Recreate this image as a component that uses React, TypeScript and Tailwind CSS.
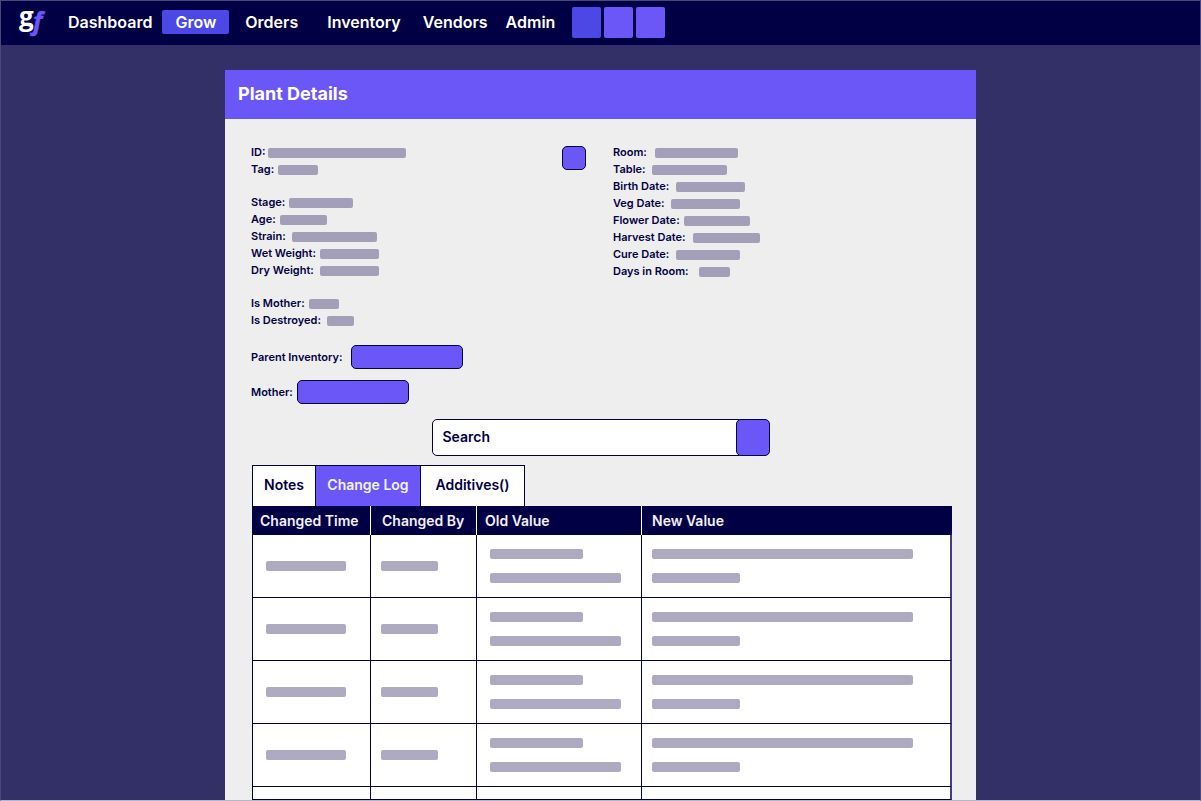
import React from 'react';

const navItems = [
  { label: 'Dashboard', className: 'ml-[18px]' },
  { label: 'Grow', className: 'ml-2.5 rounded-xs bg-[#4b48e5] px-[13px]' },
  { label: 'Orders', className: 'ml-4' },
  { label: 'Inventory', className: 'ml-[29px]' },
  { label: 'Vendors', className: 'ml-[22px]' },
  { label: 'Admin', className: 'ml-[18px]' },
];

const quickActions = [
  { label: 'Tasks', className: 'bg-[#4b48e5]' },
  { label: 'Messages', className: 'bg-[#6b57f7]' },
  { label: 'Account', className: 'bg-[#6b57f7]' },
];

const leftGroups = [
  [
    { label: 'ID:', bar: 'ml-0.5 w-[138px]' },
    { label: 'Tag:', bar: 'ml-1 w-10' },
  ],
  [
    { label: 'Stage:', bar: 'ml-1 w-16' },
    { label: 'Age:', bar: 'ml-1 w-[47px]' },
    { label: 'Strain:', bar: 'ml-1.5 w-[85px]' },
    { label: 'Wet Weight:', bar: 'ml-1 w-[59px]' },
    { label: 'Dry Weight:', bar: 'ml-1.5 w-[59px]' },
  ],
  [
    { label: 'Is Mother:', bar: 'ml-1 w-[30px]' },
    { label: 'Is Destroyed:', bar: 'ml-1.5 w-[27px]' },
  ],
];

const rightGroups = [
  [
    { label: 'Room:', bar: 'ml-2 w-[83px]' },
    { label: 'Table:', bar: 'ml-1.5 w-[75px]' },
    { label: 'Birth Date:', bar: 'ml-[7px] w-[69px]' },
    { label: 'Veg Date:', bar: 'ml-1.5 w-[69px]' },
    { label: 'Flower Date:', bar: 'ml-1 w-[66px]' },
    { label: 'Harvest Date:', bar: 'ml-[7px] w-[67px]' },
    { label: 'Cure Date:', bar: 'ml-[7px] w-16' },
    { label: 'Days in Room:', bar: 'ml-2.5 w-[31px]' },
  ],
];

const tabs = [
  { label: 'Notes', className: 'w-16 border-l bg-white text-[#020044]' },
  { label: 'Change Log', className: 'w-[105px] bg-[#6b57f7] text-[#f3f1ff]' },
  { label: 'Additives()', className: 'w-[104px] bg-white text-[#020044]' },
];

const logRows = [1, 2, 3, 4];

const Logo = () => (
  <a href="#home" aria-label="Home" className="ml-[15px] shrink-0">
    <svg width="34" height="40" viewBox="0 0 34 40" className="overflow-visible">
      <text x="3" y="24" fill="#ffffff" fontSize="26" fontWeight="700" fontFamily="'Open Sans', sans-serif">g</text>
      <text x="17" y="28" fill="#6b57f7" stroke="#6b57f7" strokeWidth="0.5" fontSize="25" fontWeight="700" fontStyle="italic" fontFamily="'Noto Sans', sans-serif">f</text>
    </svg>
  </a>
);

const DetailList = ({ groups }: { groups: { label: string; bar: string }[][] }) => (
  <div className="space-y-4 text-[11px] leading-[17px] font-semibold">
    {groups.map((group, index) => (
      <dl key={index}>
        {group.map((item) => (
          <div key={item.label} className="flex items-center">
            <dt>{item.label}</dt>
            <dd className={`h-2.5 rounded-xs bg-[#a39fb8] ${item.bar}`} />
          </div>
        ))}
      </dl>
    ))}
  </div>
);

const Bar = ({ className }: { className: string }) => (
  <div className={`h-2.5 rounded-xs bg-[#adaac1] ${className}`} />
);

const ChangeLog = () => (
  <table className="w-full table-fixed border-separate border-spacing-0 border-l border-[#020044] bg-white">
    <colgroup>
      <col className="w-[118px]" />
      <col className="w-[106px]" />
      <col className="w-[165px]" />
      <col />
    </colgroup>
    <thead className="bg-[#020044] text-left text-sm text-[#f3f1ff]">
      <tr className="h-[29px]">
        <th className="border-r border-white p-0 pl-[7px] font-semibold">Changed Time</th>
        <th className="border-r border-white p-0 pl-[11px] font-semibold">Changed By</th>
        <th className="border-r border-white p-0 pl-2 font-semibold">Old Value</th>
        <th className="p-0 pl-2.5 font-semibold">New Value</th>
      </tr>
    </thead>
    <tbody>
      {logRows.map((row) => (
        <tr key={row} className="h-[63px]">
          <td className="border-r border-b border-[#020044] p-0 pl-[13px]">
            <Bar className="w-20" />
          </td>
          <td className="border-r border-b border-[#020044] p-0 pl-2.5">
            <Bar className="w-[57px]" />
          </td>
          <td className="border-r border-b border-[#020044] p-0 pl-[13px]">
            <div className="space-y-3.5">
              <Bar className="w-[93px]" />
              <Bar className="w-[131px]" />
            </div>
          </td>
          <td className="border-r-2 border-b border-[#020044] border-r-[#45407a] p-0 pl-2.5">
            <div className="space-y-3.5">
              <Bar className="w-[261px]" />
              <Bar className="w-[88px]" />
            </div>
          </td>
        </tr>
      ))}
      <tr className="h-[13px]">
        <td className="border-r border-b border-[#020044] p-0" />
        <td className="border-r border-b border-[#020044] p-0" />
        <td className="border-r border-b border-[#020044] p-0" />
        <td className="border-r-2 border-b border-[#020044] border-r-[#45407a] p-0" />
      </tr>
    </tbody>
  </table>
);

const App = () => {
  return (
    <div className="flex min-h-screen flex-col border border-[#4a4878] border-b-[#b9b5c9] bg-[#323067] font-['Inter',sans-serif] text-[#020044]">
      <header className="flex h-11 items-center bg-[#020044] pb-0.5 text-white">
        <Logo />
        <nav className="flex items-center text-base leading-6 font-semibold">
          {navItems.map((item) => (
            <a key={item.label} href={`#${item.label.toLowerCase()}`} className={item.className}>
              {item.label}
            </a>
          ))}
        </nav>
        <div className="ml-[17px] flex gap-[3px]">
          {quickActions.map((action) => (
            <button
              key={action.label}
              type="button"
              aria-label={action.label}
              className={`h-[31px] w-[29px] rounded-xs ${action.className}`}
            />
          ))}
        </div>
      </header>

      <main className="mx-auto mt-[25px] flex w-full max-w-[751px] grow flex-col bg-[#eeeeee]">
        <h1 className="flex h-[49px] items-center bg-[#6b57f7] px-[13px] pb-0.5 text-lg font-bold text-white">
          Plant Details
        </h1>

        <section className="px-[26px] pt-[25px]">
          <div className="flex items-start">
            <div className="w-[311px]">
              <DetailList groups={leftGroups} />
            </div>
            <button
              type="button"
              aria-label="Edit plant"
              className="mt-0.5 mr-[27px] size-6 rounded-[5px] border border-[#020044] bg-[#6b57f7]"
            />
            <DetailList groups={rightGroups} />
          </div>

          <div className="mt-4 space-y-[11px] text-[11px] font-semibold">
            <div className="flex items-center">
              <span id="parent-label">Parent Inventory:</span>
              <button
                type="button"
                aria-labelledby="parent-label"
                className="ml-[9px] h-6 w-28 rounded-[5px] border border-[#020044] bg-[#6b57f7]"
              />
            </div>
            <div className="flex items-center">
              <span id="mother-label">Mother:</span>
              <button
                type="button"
                aria-labelledby="mother-label"
                className="ml-1 h-6 w-28 rounded-[5px] border border-[#020044] bg-[#6b57f7]"
              />
            </div>
          </div>
        </section>

        <form className="mx-auto mt-[15px] flex h-[37px] w-[338px]">
          <input
            type="search"
            aria-label="Search"
            placeholder="Search"
            className="-mr-1 min-w-0 grow rounded-l-[5px] border border-[#020044] bg-white px-2.5 pb-0.5 text-sm font-semibold placeholder:text-[#020044]"
          />
          <button
            type="submit"
            aria-label="Run search"
            className="relative w-[34px] rounded-[5px] border border-[#020044] bg-[#6b57f7]"
          />
        </form>

        <section className="mt-[9px] pr-6 pl-[27px]">
          <div role="tablist" className="flex">
            {tabs.map((tab) => (
              <button
                key={tab.label}
                type="button"
                role="tab"
                aria-selected={tab.label === 'Change Log'}
                className={`h-[41px] border-t border-r border-[#020044] pb-0.5 text-sm font-semibold ${tab.className}`}
              >
                {tab.label}
              </button>
            ))}
          </div>
          <ChangeLog />
        </section>
      </main>
    </div>
  );
};

export default App;
